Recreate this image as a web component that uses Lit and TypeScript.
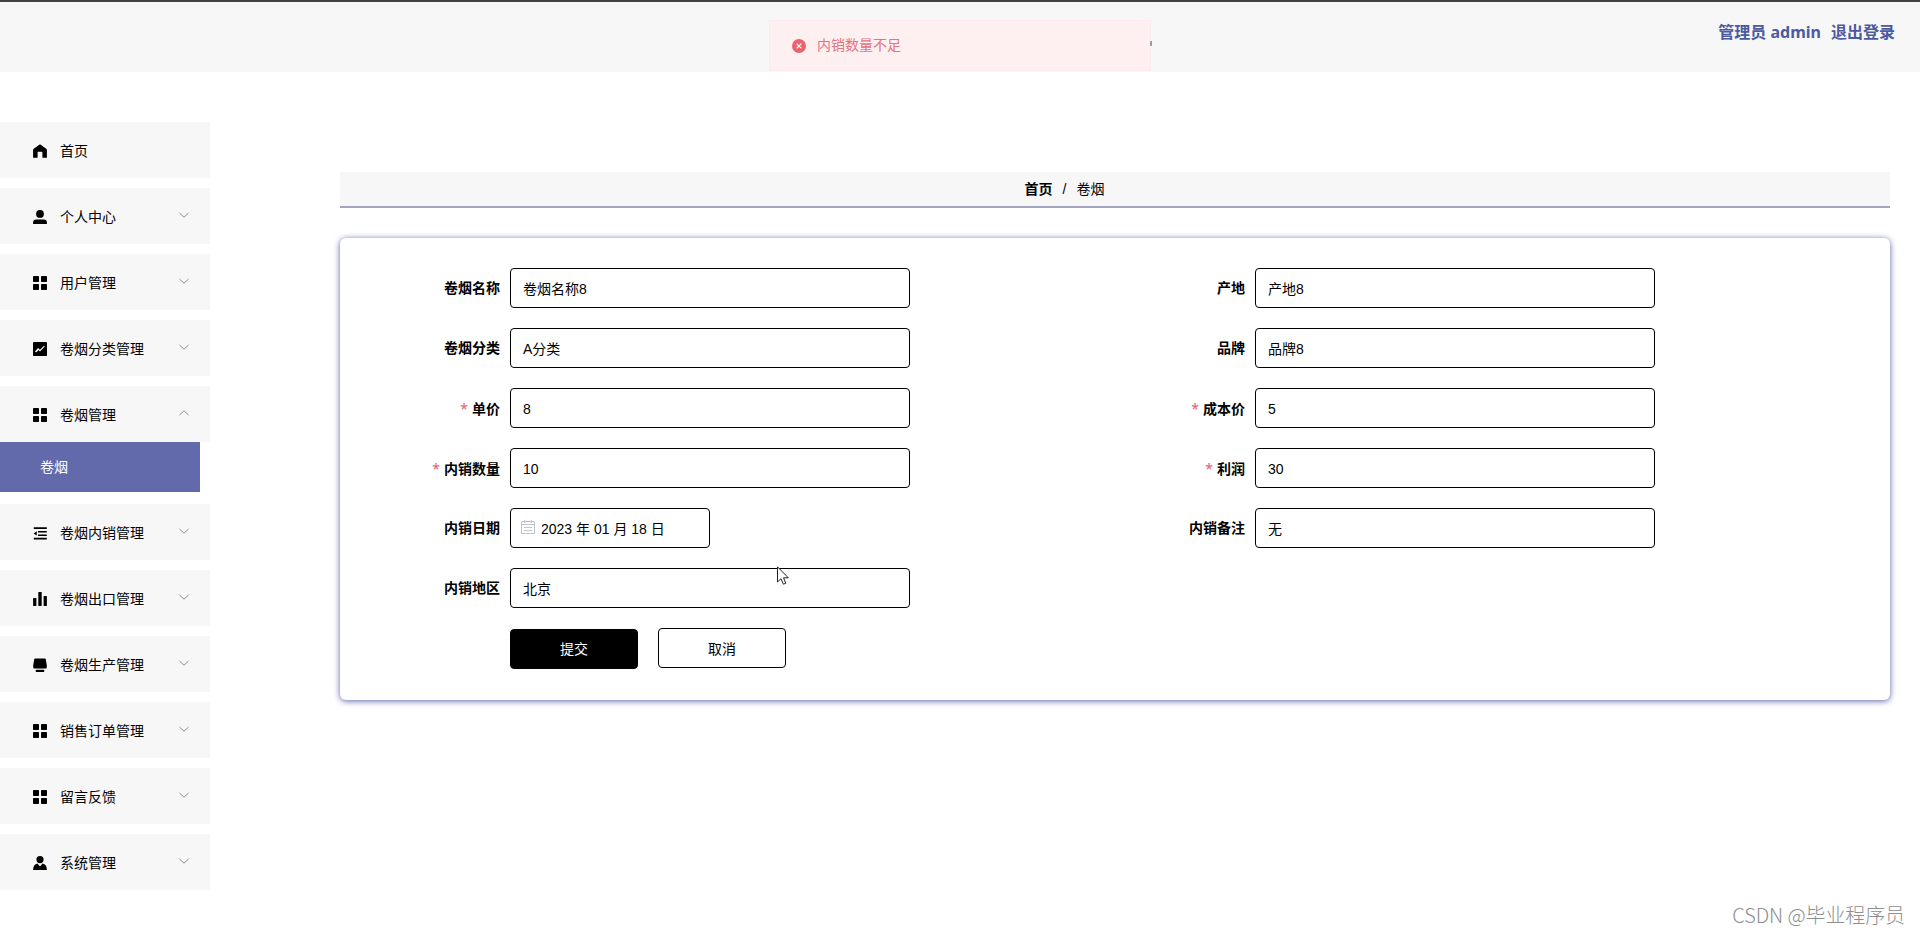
import { css, html, LitElement, svg, SVGTemplateResult } from 'lit';
import { customElement, property } from 'lit/decorators.js';

interface MenuEntry {
    icon: string;
    label: string;
    children?: string[];
    leaf?: boolean;
}

interface Field {
    label: string;
    value: string;
    required?: boolean;
    date?: boolean;
}

const MENU: MenuEntry[] = [
    { icon: 'home', label: '首页', leaf: true },
    { icon: 'user', label: '个人中心' },
    { icon: 'grid', label: '用户管理' },
    { icon: 'trend', label: '卷烟分类管理' },
    { icon: 'grid', label: '卷烟管理', children: ['卷烟'] },
    { icon: 'fold', label: '卷烟内销管理' },
    { icon: 'bars', label: '卷烟出口管理' },
    { icon: 'goods', label: '卷烟生产管理' },
    { icon: 'grid', label: '销售订单管理' },
    { icon: 'grid', label: '留言反馈' },
    { icon: 'custom', label: '系统管理' },
];

const FIELDS: Field[] = [
    { label: '卷烟名称', value: '卷烟名称8' },
    { label: '产地', value: '产地8' },
    { label: '卷烟分类', value: 'A分类' },
    { label: '品牌', value: '品牌8' },
    { label: '单价', value: '8', required: true },
    { label: '成本价', value: '5', required: true },
    { label: '内销数量', value: '10', required: true },
    { label: '利润', value: '30', required: true },
    { label: '内销日期', value: '2023 年 01 月 18 日', date: true },
    { label: '内销备注', value: '无' },
    { label: '内销地区', value: '北京' },
];

const ICONS: Record<string, SVGTemplateResult> = {
    home: svg`<path d="M7 .2 13.2 4.8Q13.9 5.3 13.9 6.2V13.8H9.4V8.4Q9.4 7.8 8.8 7.8H5.2Q4.6 7.8 4.6 8.4V13.8H.1V6.2Q.1 5.3.8 4.8Z"/>`,
    user: svg`<circle cx="7" cy="3.9" r="3.9"/><path d="M.1 14V12.6Q.1 9.4 3.3 9.4H10.7Q13.9 9.4 13.9 12.6V14Z"/>`,
    grid: svg`<rect width="6" height="6" rx=".7"/><rect x="8" width="6" height="6" rx=".7"/><rect y="8" width="6" height="6" rx=".7"/><rect x="8" y="8" width="6" height="6" rx=".7"/>`,
    trend: svg`<rect width="14" height="14" rx=".4"/><path d="M2.4 9.8 5.2 6.8 7 8.6 11.4 4.2M2.8 9.8 5 8" fill="none" stroke="#fff" stroke-width="1.1"/>`,
    fold: svg`<path d="M.8 1.2H13.8V3H.8ZM5 4.9H13.8V6.6H5ZM5 8.4H13.8V10.1H5ZM.8 11.7H13.8V13.5H.8ZM.6 7.4 3.8 5.2V9.6Z"/>`,
    bars: svg`<rect x=".1" y="6" width="3.3" height="8" rx=".4"/><rect x="5.3" width="3.4" height="14" rx=".4"/><rect x="10.6" y="4" width="3.3" height="10" rx=".4"/>`,
    goods: svg`<path d="M2.2.4H11.8Q12.6.4 12.8 1.2L13.8 7.4V9.4Q13.8 10.4 12.7 10.4H1.3Q.2 10.4.2 9.4V7.4L1.2 1.2Q1.4.4 2.2.4ZM2.8 11.8H11.2V13.9H2.8Z"/>`,
    custom: svg`<circle cx="7" cy="3.6" r="3.6"/><path d="M.1 13.9Q.3 8.4 4.4 7.6L7 10.6 9.6 7.6Q13.7 8.4 13.9 13.9Z"/>`,
};

@customElement('side-menu')
export class SideMenu extends LitElement {

    @property({ attribute: false }) entries: MenuEntry[] = [];

    static get styles() {
        return css`
      :host {
        display: flex;
        flex-direction: column;
        gap: 10px;
        width: 210px;
      }
      .title {
        display: flex;
        align-items: center;
        height: 56px;
        box-sizing: border-box;
        padding: 0 20px 0 33px;
        background: #f8f7f8;
        font-size: 14px;
        color: #000;
      }
      .icon {
        width: 14px;
        height: 14px;
        margin: 2px 13px 0 0;
      }
      .label {
        flex: 1;
        padding-bottom: 1px;
      }
      .arrow {
        width: 12px;
        height: 12px;
        margin-bottom: 2px;
        fill: none;
        stroke: #888b91;
      }
      .child {
        width: 200px;
        height: 50px;
        margin-bottom: 2px;
        box-sizing: border-box;
        padding-left: 40px;
        background: #626aab;
        color: #fff;
        font-size: 14px;
        line-height: 50px;
      }
      `;
    }

    render() {
        return html`${this.entries.map(e => html`
      <div>
        <div class="title">
          <svg class="icon" viewBox="0 0 14 14">${ICONS[e.icon]}</svg>
          <span class="label">${e.label}</span>
          ${e.leaf ? '' : html`
          <svg class="arrow" viewBox="0 0 12 12"><path d=${e.children ? 'M1.5 8 6 3.8 10.5 8' : 'M1.5 4 6 8.2 10.5 4'} /></svg>`}
        </div>
        ${(e.children || []).map(c => html`<div class="child">${c}</div>`)}
      </div>`)}
    `;
    }
}

@customElement('form-field')
export class FormField extends LitElement {

    @property({ attribute: false }) field!: Field;

    static get styles() {
        return css`
      :host {
        display: flex;
        height: 40px;
      }
      .label {
        width: 140px;
        box-sizing: border-box;
        padding-right: 10px;
        text-align: right;
        font-size: 14px;
        font-weight: bold;
        line-height: 41px;
      }
      .star {
        color: #e0606c;
        font-family: "Noto Sans", sans-serif;
        font-weight: normal;
        margin-right: 4px;
      }
      .input {
        width: 400px;
        display: flex;
        align-items: center;
        box-sizing: border-box;
        padding: 2px 12px 0;
        border: 1px solid #000;
        border-radius: 4px;
        font-size: 14px;
        line-height: 16px;
      }
      .date {
        width: 200px;
        padding-left: 10px;
      }
      .calendar {
        width: 14px;
        height: 14px;
        margin: 0 6px 4px 0;
        fill: none;
        stroke: #c0c4cc;
      }
      `;
    }

    render() {
        const f = this.field;
        return html`
      <div class="label">${f.required ? html`<span class="star">*</span>` : ''}${f.label}</div>
      <div class="input ${f.date ? 'date' : ''}">
        ${f.date ? html`
        <svg class="calendar" viewBox="0 0 14 14"><path d="M.5 1.5H13.5V13.5H.5ZM.5 4.5H13.5M3.5 0V3M10.5 0V3M3 7.5H11M3 10.5H11"/></svg>` : ''}
        <span>${f.value}</span>
      </div>
    `;
    }
}

@customElement('app-root')
export class AppRoot extends LitElement {

    static get styles() {
        return css`
      :host {
        display: block;
        position: relative;
        height: 934px;
        overflow: hidden;
        background: #fff;
        color: #000;
        font-family: "Liberation Sans", "Noto Sans CJK SC", sans-serif;
      }
      .header {
        display: flex;
        justify-content: flex-end;
        gap: 10px;
        height: 72px;
        box-sizing: border-box;
        padding: 17px 25px 0 0;
        border-top: 2px solid #444144;
        background: #f8f7f8;
        color: #4c5aa0;
        font: bold 16px/26px "Noto Sans", "Noto Sans CJK SC", sans-serif;
      }
      .body {
        display: flex;
        gap: 130px;
        padding: 50px 30px 0 0;
      }
      .main {
        flex: 1;
        padding-top: 50px;
      }
      .breadcrumb {
        display: flex;
        justify-content: center;
        gap: 10px;
        height: 36px;
        box-sizing: border-box;
        padding-right: 101px;
        border-bottom: 2px solid #a3a4c1;
        background: #f8f7f8;
        font-size: 14px;
        line-height: 35px;
      }
      .card {
        height: 462px;
        box-sizing: border-box;
        margin-top: 30px;
        padding: 30px;
        border-radius: 6px;
        box-shadow: 0 1px 6px #5a62a8;
      }
      .fields {
        display: grid;
        grid-template-columns: 1fr 1fr;
        row-gap: 20px;
      }
      .actions {
        display: flex;
        gap: 20px;
        padding: 20px 0 0 140px;
      }
      .button {
        width: 128px;
        height: 40px;
        box-sizing: border-box;
        border: 1px solid #000;
        border-radius: 4px;
        text-align: center;
        font-size: 14px;
        line-height: 40px;
      }
      .primary {
        margin-top: 1px;
        background: #000;
        color: #fff;
        line-height: 38px;
      }
      .message {
        position: absolute;
        top: 20px;
        left: 769px;
        display: flex;
        align-items: center;
        gap: 11px;
        width: 382px;
        height: 51px;
        box-sizing: border-box;
        padding-left: 22px;
        border: 1px solid #fdeaec;
        background: #feeff1;
        color: #e27480;
        font-size: 14px;
        line-height: 20px;
      }
      .message svg {
        width: 14px;
        height: 14px;
      }
      .message span {
        margin-bottom: 2px;
      }
      .message::after {
        content: "";
        position: absolute;
        top: 20px;
        right: -2px;
        width: 2px;
        height: 5px;
        background: #96a0a4;
      }
      .pointer {
        position: absolute;
        top: 566px;
        left: 777px;
        width: 12px;
        height: 19px;
      }
      .watermark {
        position: absolute;
        right: 15px;
        bottom: 4px;
        color: #8e8e8e;
        font: 300 20px/30px "Noto Sans CJK SC", sans-serif;
        letter-spacing: -.1px;
      }
      `;
    }

    render() {
        return html`
      <div class="header"><span>管理员 admin</span><span>退出登录</span></div>
      <div class="body">
        <side-menu .entries=${MENU}></side-menu>
        <div class="main">
          <div class="breadcrumb"><b>首页</b><span>/</span><span>卷烟</span></div>
          <div class="card">
            <div class="fields">${FIELDS.map(f => html`<form-field .field=${f}></form-field>`)}</div>
            <div class="actions">
              <div class="button primary">提交</div>
              <div class="button">取消</div>
            </div>
          </div>
        </div>
      </div>
      <div class="message">
        <svg viewBox="0 0 14 14"><circle cx="7" cy="7" r="7" fill="#ec626c"/><path d="M4.6 4.6 9.4 9.4M9.4 4.6 4.6 9.4" stroke="#fff" stroke-width="1.2"/></svg>
        <span>内销数量不足</span>
      </div>
      <svg class="pointer" viewBox="0 0 12 19"><path d="M.5 .8V16L4 12.7 6.4 18.2 8.8 17.2 6.5 11.8H11.3Z" fill="#fff" stroke="#222"/></svg>
      <div class="watermark">CSDN @毕业程序员</div>
    `;
    }
}
